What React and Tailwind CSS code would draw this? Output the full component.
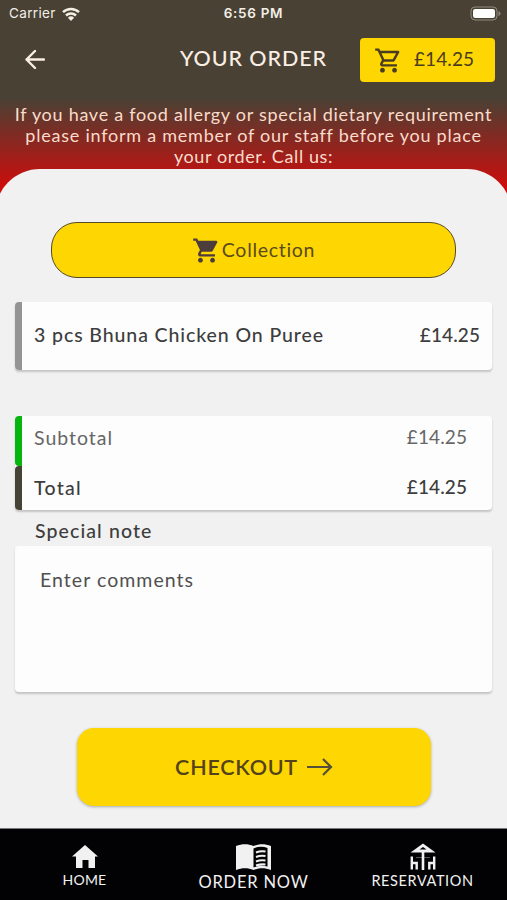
import React, { useState } from 'react'
import { MdOutlineShoppingCart, MdShoppingCart } from 'react-icons/md'

const navItems = [
  { id: 'home', label: 'HOME', icon: HomeIcon, text: 'text-[14px] leading-[18px] tracking-[0.2px]', box: 'w-[169px] pt-[16px] gap-[3px]' },
  { id: 'order', label: 'ORDER NOW', icon: MenuBookIcon, text: 'text-[16.5px] leading-[20px] tracking-[0.8px]', box: 'w-[169px] pt-[15px] gap-[2px]' },
  { id: 'reservation', label: 'RESERVATION', icon: TableIcon, text: 'text-[14.5px] leading-[18px] tracking-[0.6px]', box: 'w-[169px] pt-[14px] gap-[2px]' },
]

function HomeIcon() {
  return (
    <svg width="26" height="23" viewBox="0 0 26 23" fill="currentColor">
      <path d="M13 0 26 11.5h-3V23h-6.500v-8h-6v8H4V11.500H0Z" />
    </svg>
  )
}

function MenuBookIcon() {
  return (
    <svg width="35" height="26" viewBox="0 0 35 26" fill="none">
      <path d="M0 2C6-.500 12-.500 17.500 2 23-.500 29-.500 35 2v24c-6-2.400-12-2.400-17.500 0C12 23.600 6 23.600 0 26Z" fill="currentColor" />
      <path d="M17.500 4.500C22 2.500 27 2.300 31.500 4v18.500c-4.500-1.400-9.500-1-14 1Z" fill="#000" />
      <path d="M20 8.500q4.500-2 9.500-1M20 13q4.500-2 9.500-1M20 17.500q4.500-2 9.500-1M20 21.500q4.500-1.500 9.500-1" stroke="currentColor" strokeWidth="2" />
    </svg>
  )
}

// Parasol con dos sillas
function TableIcon() {
  return (
    <svg width="26" height="27" viewBox="0 0 26 27" fill="none" stroke="currentColor">
      <path d="M13 .5 25.500 9.500H.500Z" fill="currentColor" stroke="none" />
      <path d="M13 4 16.500 6.500H9.500Z" fill="#000" stroke="none" />
      <path d="M13 8v19" strokeWidth="2.600" />
      <path d="M1.800 13.500v13M1.800 20h4.900v6.500M24.200 13.500v13M24.200 20h-4.900v6.500" strokeWidth="2.400" />
      <path d="M6 14.500h14" strokeWidth="1" strokeOpacity=".35" />
    </svg>
  )
}

function StatusBar() {
  return (
    <div className="flex h-[27px] items-center pl-[9px] pr-[5px] font-['Inter','Liberation_Sans',sans-serif] text-[#f3eee6]">
      <div className="flex flex-1 items-center gap-[6px]">
        <span className="text-[13.5px] tracking-[0.35px]">Carrier</span>
        <svg width="18" height="14" viewBox="0 0 18 14" fill="none" stroke="currentColor" strokeWidth="2.500">
          <path d="M1 5.200a11.500 11.500 0 0 1 16 0M4 8.500a7.200 7.200 0 0 1 10 0" />
          <path d="M9 14 5.900 10.700a4.500 4.500 0 0 1 6.200 0Z" fill="currentColor" stroke="none" />
        </svg>
      </div>
      <span className="mr-[4px] text-[13.5px] font-semibold tracking-[0.7px]">6:56 PM</span>
      <div className="flex flex-1 items-center justify-end">
        <svg width="32" height="15" viewBox="0 0 32 15">
          <rect x="1" y="1" width="26" height="13" rx="4" fill="none" stroke="#918b80" />
          <rect x="3" y="3" width="22" height="9" rx="2.200" fill="#fff" />
          <path d="M28.500 5v5q2-1 2-2.500t-2-2.500Z" fill="#918b80" />
        </svg>
      </div>
    </div>
  )
}

function Header({ total }) {
  return (
    <header className="flex h-[71px] items-start pl-[25px] pr-[12px]">
      <button className="mt-[22px] w-[20px]" aria-label="Back">
        <svg width="20" height="20" viewBox="0 0 20 20" fill="none" stroke="#fbeee4" strokeWidth="2.400" strokeLinecap="round" strokeLinejoin="round">
          <path d="M19 10.500H1.500M10 2 1.500 10.500l8.500 8.500" />
        </svg>
      </button>
      <h1 className="ml-[135px] mt-[16px] w-[148px] whitespace-nowrap text-[21.5px] leading-[30px] font-medium tracking-[0.9px] text-[#fbeee4]">YOUR ORDER</h1>
      <button className="ml-auto mt-[11px] flex h-[44px] w-[135px] items-center rounded-[4px] bg-[#fed602] pl-[14px] text-[#4a3c20]">
        <MdOutlineShoppingCart size={29} />
        <span className="ml-[11px] -mt-[2px] text-[19px] tracking-[0.1px]">{total}</span>
      </button>
    </header>
  )
}

export default function App() {
  const [note, setNote] = useState('')
  const total = '£14.25'

  return (
    <div className="flex h-[900px] w-[507px] flex-col overflow-hidden bg-[#494134] font-['Lato','Open_Sans',sans-serif]">
      <StatusBar />
      <Header total={total} />

      <div className="flex flex-1 flex-col bg-[linear-gradient(to_bottom,#494134_0px,#d10b0b_92px)]">
        <p className="h-[71px] whitespace-nowrap pt-[6px] text-center text-[18px] leading-[21px] text-[#f9dccb]">
          <span className="block tracking-[0.72px]">If you have a food allergy or special dietary requirement</span>
          <span className="block tracking-[0.77px]">please inform a member of our staff before you place</span>
          <span className="block tracking-[0.6px]">your order. Call us:</span>
        </p>

        <main className="-mx-[5px] flex flex-1 flex-col rounded-t-[45px] bg-[#f1f1f1] px-[20px] pt-[53px] text-[19.5px] text-[#3d3d3d]">
          <button className="mx-[36px] flex h-[56px] shrink-0 items-center justify-center rounded-[26px] border border-[#554b2a] bg-[#fed602]">
            <MdShoppingCart size={29} className="text-[#4d3c3c]" />
            <span className="ml-[1px] -mt-[1px] tracking-[0.7px] text-[#5a4a1c]">Collection</span>
          </button>

          <section className="mt-[24px] flex h-[68px] shrink-0 items-center overflow-hidden rounded-[4px] bg-[#fdfdfd] shadow-[0_2px_2px_#c4c4c4]">
            <div className="h-full w-[7px] bg-[#949494]" />
            <span className="ml-[12px] -mt-[2px] font-medium tracking-[0.9px]">3 pcs Bhuna Chicken On Puree</span>
            <span className="ml-auto mr-[12px] -mt-[2px] font-medium text-[19px] tracking-[0.1px]">{total}</span>
          </section>

          <section className="mt-[46px] shrink-0 rounded-[4px] bg-[#fdfdfd] shadow-[0_2px_2px_#c4c4c4]">
            <div className="flex h-[50px] pr-[25px] text-[#666]">
              <div className="w-[7px] rounded-l-[4px] bg-[#08b40e]" />
              <span className="ml-[12px] mt-[7px] tracking-[1px]">Subtotal</span>
              <span className="ml-auto mt-[7px] text-[19px] tracking-[0.1px]">{total}</span>
            </div>
            <div className="flex h-[44px] pr-[25px] font-medium">
              <div className="w-[7px] rounded-l-[4px] bg-[#454236]" />
              <span className="ml-[12px] mt-[7px] tracking-[1.3px]">Total</span>
              <span className="ml-auto mt-[7px] text-[19px] tracking-[0.1px]">{total}</span>
            </div>
          </section>

          <label htmlFor="note" className="ml-[20px] mt-[6px] h-[30px] font-medium leading-[30px] tracking-[1.1px]">Special note</label>
          <textarea
            id="note"
            value={note}
            onChange={(e) => setNote(e.target.value)}
            placeholder="Enter comments"
            className="h-[146px] shrink-0 resize-none rounded-[4px] bg-[#fdfdfd] px-[25px] pt-[19px] tracking-[1.05px] shadow-[0_2px_2px_#c4c4c4] outline-none placeholder:text-[#505050]"
          />

          <button className="ml-[62px] mt-[36px] flex h-[78px] w-[354px] shrink-0 items-center justify-center rounded-[17px] bg-[#fed602] text-[21.5px] font-semibold tracking-[0.75px] text-[#54431a] shadow-[0_1px_3px_#aaa]">
            CHECKOUT
            <svg className="ml-[9px]" width="26" height="18" viewBox="0 0 26 18" fill="none" stroke="#555039" strokeWidth="2.200">
              <path d="M0 9h24M16 1l8 8-8 8" />
            </svg>
          </button>
        </main>
      </div>

      <nav className="flex h-[72px] shrink-0 border-t border-[#777] bg-[#020104] text-[#f1f1f1]">
        {navItems.map(({ id, label, icon: Icon, text, box }) => (
          <button key={id} className={`flex flex-col items-center ${box}`}>
            <Icon />
            <span className={`whitespace-nowrap ${text}`}>{label}</span>
          </button>
        ))}
      </nav>
    </div>
  )
}
